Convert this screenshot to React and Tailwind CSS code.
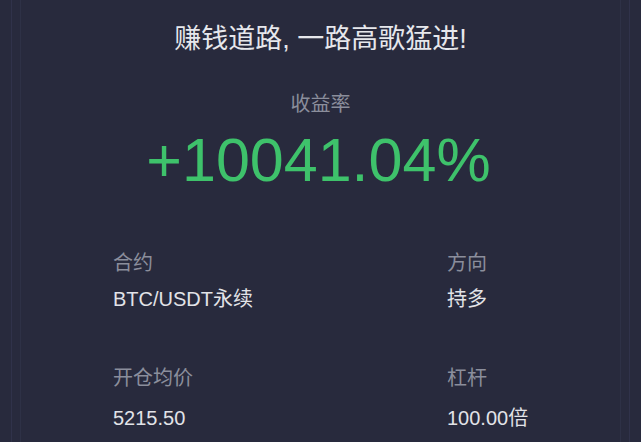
export default function App() {
  const font = { fontFamily: '"Liberation Sans", "Noto Sans CJK SC", sans-serif' };
  return (
    <div className="w-[641px] h-[442px] overflow-hidden bg-[#282a3d]" style={font}>
      <div className="h-full mx-[11px] border-x border-[#30324a]">
        <div className="h-full mx-[8px] border-x border-[#2e3146]">
          <div className="flex flex-col items-center">
            <h1 className="mt-[22px] text-[27px] leading-[35px] text-[#e6e7ec] font-normal">
              赚钱道路, 一路高歌猛进!
            </h1>
            <p className="mt-[33px] text-[20px] leading-[28px] text-[#8b8e9c]">收益率</p>
            <p className="mt-[7px] -ml-[4px] text-[61px] leading-[70px] text-[#3ec26b]">+10041.04%</p>
          </div>
          <div className="grid grid-cols-[334px_1fr] pl-[92px] mt-[54px]">
            <div>
              <p className="text-[20px] leading-[28px] text-[#8b8e9c]">合约</p>
              <p className="mt-[8px] text-[20px] leading-[28px] text-[#e2e3e8]">BTC/USDT永续</p>
            </div>
            <div>
              <p className="text-[20px] leading-[28px] text-[#8b8e9c]">方向</p>
              <p className="mt-[8px] text-[20px] leading-[28px] text-[#e2e3e8]">持多</p>
            </div>
            <div className="mt-[51px]">
              <p className="text-[20px] leading-[28px] text-[#8b8e9c]">开仓均价</p>
              <p className="mt-[12px] text-[20px] leading-[28px] text-[#e2e3e8]">5215.50</p>
            </div>
            <div className="mt-[51px]">
              <p className="text-[20px] leading-[28px] text-[#8b8e9c]">杠杆</p>
              <p className="mt-[12px] text-[20px] leading-[28px] text-[#e2e3e8]">100.00倍</p>
            </div>
          </div>
        </div>
      </div>
    </div>
  );
}
